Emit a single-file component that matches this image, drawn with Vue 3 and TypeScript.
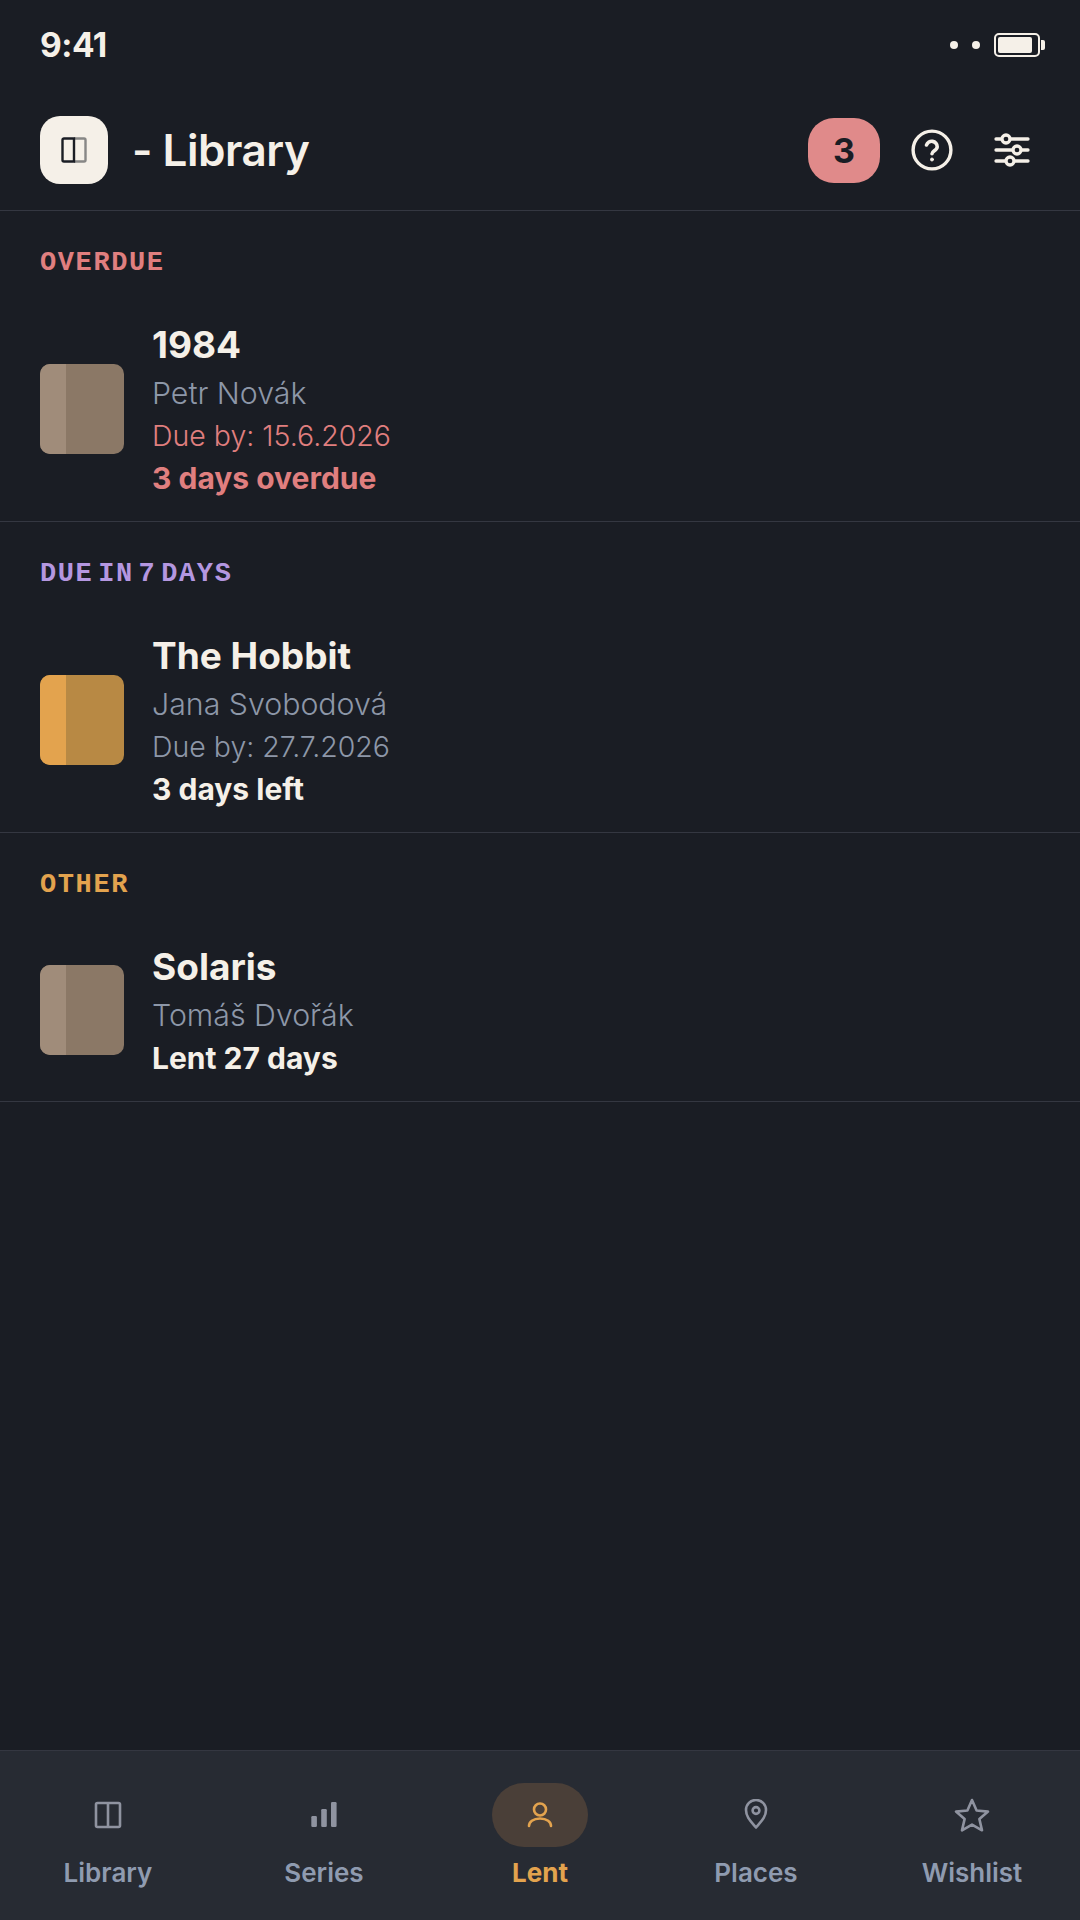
<script setup lang="ts">
interface Loan {
  title: string
  person: string
  due?: string
  status: string
  spine: string
  cover: string
}

interface Section {
  label: string
  tone: 'red' | 'purple' | 'orange'
  loans: Loan[]
}

const sections: Section[] = [
  {
    label: 'OVERDUE',
    tone: 'red',
    loans: [
      { title: '1984', person: 'Petr Novák', due: 'Due by: 15.6.2026', status: '3 days overdue', spine: '#a08c7a', cover: '#8b7866' },
    ],
  },
  {
    label: 'DUE IN 7 DAYS',
    tone: 'purple',
    loans: [
      { title: 'The Hobbit', person: 'Jana Svobodová', due: 'Due by: 27.7.2026', status: '3 days left', spine: '#e3a34e', cover: '#b88944' },
    ],
  },
  {
    label: 'OTHER',
    tone: 'orange',
    loans: [
      { title: 'Solaris', person: 'Tomáš Dvořák', status: 'Lent 27 days', spine: '#a08c7a', cover: '#8b7866' },
    ],
  },
]

const tabs = ['Library', 'Series', 'Lent', 'Places', 'Wishlist']
</script>

<template>
  <div class="screen">
    <div class="status-bar">
      <span class="clock">9:41</span>
      <div class="status-right">
        <span class="dot"></span>
        <span class="dot"></span>
        <span class="battery"><span class="battery-fill"></span></span>
      </div>
    </div>

    <header class="top-bar">
      <div class="logo">
        <svg width="26" height="26" viewBox="0 0 26 26" fill="none" stroke="#1a1d24" stroke-width="2.4">
          <path d="M13 1.5H3a1.500 1.500 0 0 0-1.500 1.500v20A1.500 1.500 0 0 0 3 24.500h10z" />
          <path d="M13 1.500h10A1.500 1.500 0 0 1 24.500 3v20a1.500 1.500 0 0 1-1.500 1.500H13" opacity="0.5" />
        </svg>
      </div>
      <h1 class="app-title">- Library</h1>
      <span class="count-badge">3</span>
      <svg class="help" width="42" height="42" viewBox="0 0 42 42" fill="none" stroke="#f5f0e8" stroke-width="3.400" stroke-linecap="round">
        <circle cx="21" cy="21" r="18.900" />
        <path d="M15.500 16a5.500 5.500 0 0 1 10.700 1.800c0 3.700-5.200 4.200-5.200 7" stroke-width="3.600" />
        <circle cx="21" cy="30.500" r="1.500" fill="#f5f0e8" stroke-width="1" />
      </svg>
      <svg class="sliders" width="36" height="34" viewBox="0 0 36 34" fill="none" stroke="#f5f0e8" stroke-width="3.300" stroke-linecap="round">
        <path d="M2 6h32M2 17h32M2 28h32" />
        <circle cx="12" cy="6" r="4" fill="#1a1d24" />
        <circle cx="23" cy="17" r="4" fill="#1a1d24" />
        <circle cx="16" cy="28" r="4" fill="#1a1d24" />
      </svg>
    </header>

    <main class="content">
      <section v-for="section in sections" :key="section.label" class="loan-section">
        <h2 class="section-label" :class="section.tone">{{ section.label }}</h2>
        <article v-for="loan in section.loans" :key="loan.title" class="loan">
          <div class="thumb" :style="{ background: loan.cover }">
            <span class="thumb-spine" :style="{ background: loan.spine }"></span>
          </div>
          <div class="loan-text">
            <h3 class="loan-title">{{ loan.title }}</h3>
            <p class="loan-person">{{ loan.person }}</p>
            <p v-if="loan.due" class="loan-due" :class="{ late: section.tone === 'red' }">{{ loan.due }}</p>
            <p class="loan-status" :class="{ late: section.tone === 'red' }">{{ loan.status }}</p>
          </div>
        </article>
      </section>
    </main>

    <nav class="tab-bar">
      <div v-for="tab in tabs" :key="tab" class="tab" :class="{ active: tab === 'Lent' }">
        <span class="tab-icon">
          <svg v-if="tab === 'Library'" width="32" height="32" viewBox="0 0 32 32" fill="none" stroke="currentColor" stroke-width="2.600" stroke-linejoin="round">
            <rect x="4" y="4" width="24" height="24" rx="1.500" />
            <path d="M16 4v24" />
          </svg>
          <svg v-else-if="tab === 'Series'" width="32" height="32" viewBox="0 0 32 32" fill="currentColor">
            <rect x="3.300" y="17" width="5.600" height="11" rx="1.200" />
            <rect x="13.200" y="10" width="5.600" height="18" rx="1.200" />
            <rect x="23" y="3" width="5.600" height="25" rx="1.200" />
          </svg>
          <svg v-else-if="tab === 'Lent'" width="32" height="32" viewBox="0 0 32 32" fill="none" stroke="currentColor" stroke-width="2.600" stroke-linecap="round">
            <circle cx="16" cy="10.500" r="6" />
            <path d="M5 27c0-4 4-7.500 11-7.500S27 23 27 27" />
          </svg>
          <svg v-else-if="tab === 'Places'" width="32" height="32" viewBox="0 0 32 32" fill="none" stroke="currentColor" stroke-width="2.600" stroke-linejoin="round">
            <path d="M16 28.500C11 22.500 6 18 6 11a10 10 0 0 1 20 0c0 7-5 11.500-10 17.500z" />
            <circle cx="16" cy="11.500" r="3.400" />
          </svg>
          <svg v-else width="36" height="36" viewBox="0 0 36 36" fill="none" stroke="currentColor" stroke-width="2.600" stroke-linejoin="round">
            <path d="M18 3l4.600 10.500 11.400 1.100-8.600 7.500 2.600 11.200L18 27.600 8 33.300l2.600-11.200L2 14.600l11.400-1.100z" />
          </svg>
        </span>
        <span class="tab-label">{{ tab }}</span>
      </div>
    </nav>
  </div>
</template>

<style>
html,
body {
  margin: 0;
  background: #1a1d24;
}
</style>

<style scoped>
.screen {
  width: 1080px;
  height: 1920px;
  display: flex;
  flex-direction: column;
  background: #1a1d24;
  color: #f5f0e8;
  font-family: Inter, "Noto Sans", sans-serif;
  overflow: hidden;
}

.status-bar {
  height: 90px;
  box-sizing: border-box;
  padding: 0 36px 0 40px;
  display: flex;
  align-items: center;
  justify-content: space-between;
}

.clock {
  font-size: 33.5px;
  font-weight: 700;
  letter-spacing: -0.5px;
}

.status-right {
  display: flex;
  align-items: center;
  gap: 14px;
}

.dot {
  width: 8px;
  height: 8px;
  border-radius: 50%;
  background: #f5f0e8;
}

.battery {
  position: relative;
  width: 46px;
  height: 24px;
  box-sizing: border-box;
  margin-right: 4px;
  padding: 2px;
  border: 2px solid #f5f0e8;
  border-radius: 5px;
  display: flex;
}

.battery::after {
  content: "";
  position: absolute;
  right: -7px;
  top: 5px;
  width: 4px;
  height: 10px;
  background: #f5f0e8;
  border-radius: 0 2px 2px 0;
}

.battery-fill {
  width: 34px;
  background: #f5f0e8;
  border-radius: 2px;
}

.top-bar {
  height: 121px;
  box-sizing: border-box;
  padding: 0 50px 0 40px;
  display: flex;
  align-items: center;
  border-bottom: 1px solid #343741;
}

.logo {
  width: 68px;
  height: 68px;
  border-radius: 20px;
  background: #f5f0e8;
  display: flex;
  align-items: center;
  justify-content: center;
}

.app-title {
  margin: 0 0 0 24px;
  flex: 1;
  font-size: 44px;
  font-weight: 600;
  letter-spacing: -0.5px;
}

.count-badge {
  width: 72px;
  height: 65px;
  border-radius: 26px;
  background: #e08a8a;
  color: #1a1d24;
  font-size: 34px;
  font-weight: 700;
  display: flex;
  align-items: center;
  justify-content: center;
}

.help {
  margin-left: 31px;
}

.sliders {
  margin-left: 41px;
}

.content {
  flex: 1;
}

.loan-section {
  border-bottom: 1px solid #343741;
}

.section-label {
  margin: 0;
  padding: 39px 40px 0;
  height: 49px;
  font-family: "Liberation Mono", monospace;
  font-size: 27px;
  line-height: 26px;
  font-weight: 700;
  letter-spacing: 1.6px;
  word-spacing: -13px;
}

.section-label.red {
  color: #e07f7f;
}

.section-label.purple {
  color: #b497e0;
}

.section-label.orange {
  color: #e3a34e;
}

.loan {
  display: flex;
  align-items: center;
  gap: 28px;
  padding: 20px 40px 22px;
}

.thumb {
  width: 84px;
  height: 90px;
  border-radius: 10px;
  overflow: hidden;
  flex-shrink: 0;
}

.thumb-spine {
  display: block;
  width: 26px;
  height: 100%;
}

.loan-text {
  display: flex;
  flex-direction: column;
}

.loan-title {
  margin: 1px 0 2px;
  font-size: 37px;
  line-height: 50px;
  font-weight: 700;
}

.loan-person,
.loan-due,
.loan-status {
  margin: 0;
  line-height: 42px;
}

.loan-person {
  font-size: 30.3px;
  line-height: 43px;
  color: #8d97a8;
  font-weight: 300;
}

.loan-due {
  font-size: 28.5px;
  color: #8d97a8;
  font-weight: 300;
}

.loan-status {
  font-size: 30px;
  font-weight: 700;
}

.loan-text .late {
  color: #e07f7f;
}

.tab-bar {
  height: 170px;
  box-sizing: border-box;
  border-top: 1px solid #343741;
  background: #272b33;
  display: grid;
  grid-template-columns: repeat(5, 1fr);
}

.tab {
  display: flex;
  flex-direction: column;
  align-items: center;
  padding-top: 32px;
  color: #8f93a0;
}

.tab-icon {
  width: 96px;
  height: 64px;
  border-radius: 32px;
  display: flex;
  align-items: center;
  justify-content: center;
}

.tab.active {
  color: #e3a34e;
}

.tab.active .tab-icon {
  background: #4a3f38;
}

.tab-label {
  margin-top: 9px;
  font-size: 26px;
  line-height: 34px;
  font-weight: 600;
  color: #8f9bb0;
}

.tab.active .tab-label {
  color: #e3a34e;
  font-weight: 700;
}
</style>
